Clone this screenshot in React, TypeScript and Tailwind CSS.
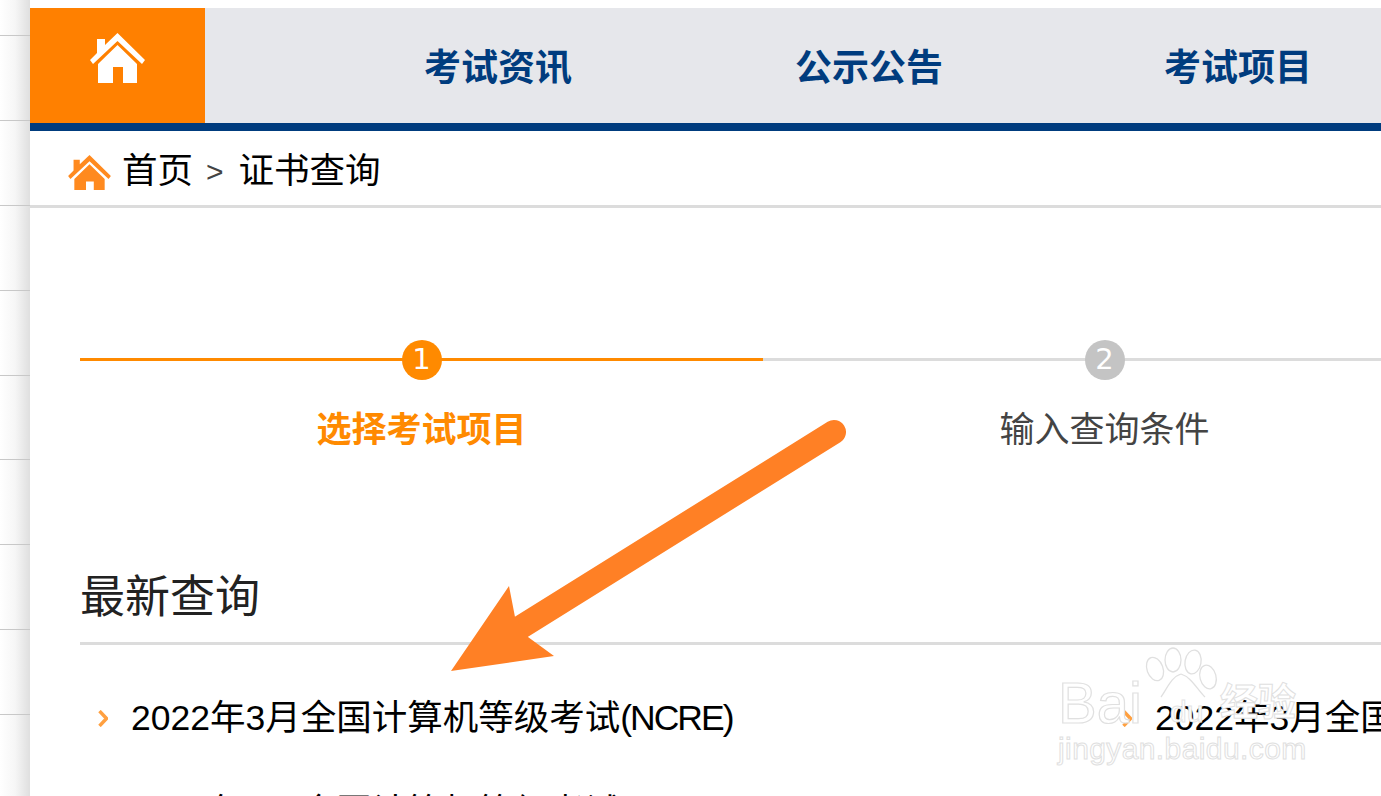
const font = "font-['Liberation_Sans','Noto_Sans_CJK_SC',sans-serif]";

function HouseIcon({ className, box }: { className: string; box: string }) {
  return (
    <svg viewBox={box} className={className} fill="currentColor">
      <path d="M27.5 0 L55 27 L52 31 L27.5 8 L3 31 L0 27 L7 20 L7 6 L15 6 L15 12 Z" />
      <path d="M27.5 12 L47 31 L47 50 L33 50 L33 34 L23 34 L23 50 L8 50 L8 31 Z" />
    </svg>
  );
}

function Chevron() {
  return (
    <svg viewBox="0 0 10 17" className="w-[10px] h-[17px] shrink-0 text-[#ffa040]" fill="none" stroke="currentColor" strokeWidth="3.4">
      <path d="M1.5 1 L8.5 8.5 L1.5 16" />
    </svg>
  );
}

function Watermark() {
  return (
    <div className="absolute left-[1058px] top-[645px] w-[310px] h-[135px]">
      <svg viewBox="0 0 80 60" className="absolute left-[85px] top-0 w-[80px] h-[60px]" fill="#ffffff" stroke="#e0e0e0" strokeWidth="1.3">
        <ellipse cx="12" cy="24" rx="8" ry="12" transform="rotate(-20 12 24)" />
        <ellipse cx="30" cy="15" rx="8" ry="12" />
        <ellipse cx="50" cy="17" rx="8" ry="12" transform="rotate(10 50 17)" />
        <ellipse cx="65" cy="32" rx="8" ry="12" transform="rotate(-15 65 32)" />
        <path d="M38 29 C28 32 24 44 18 52 M38 29 C48 32 54 44 62 52" fill="none" />
      </svg>
      <div className="absolute left-0 top-[29px] text-[58px] leading-none text-white [-webkit-text-stroke:1.2px_#e0e0e0]">Bai</div>
      <div className="absolute left-[112px] top-[52px] text-[30px] leading-none text-white [-webkit-text-stroke:1px_#e4e4e4]">du</div>
      <div className="absolute left-[162px] top-[38px] text-[38px] leading-none font-bold text-white [-webkit-text-stroke:1px_#e0e0e0]">经验</div>
      <div className="absolute left-0 top-[89px] text-[30px] leading-none tracking-[0.4px] text-white [-webkit-text-stroke:1px_#e0e0e0]">jingyan.baidu.com</div>
    </div>
  );
}

function ListItem({ children, clip }: { children: React.ReactNode; clip?: boolean }) {
  return (
    <div className={`flex items-center pl-[18px] gap-[23px] h-[60px] whitespace-nowrap ${clip ? "" : "w-[1024px] shrink-0"}`}>
      <Chevron />
      <span>{children}</span>
    </div>
  );
}

function Step({ n, title, active }: { n: string; title: string; active?: boolean }) {
  return (
    <div className="w-[683px] shrink-0 flex flex-col items-center relative">
      <div className={`absolute left-0 right-0 top-[18px] h-[3px] ${active ? "bg-[#ff8a00]" : "bg-[#dcdcdc]"}`} />
      <div className={`relative w-10 h-10 rounded-full flex items-center justify-center text-white font-['DejaVu_Sans',sans-serif] text-[29px] ${active ? "bg-[#ff8a00]" : "bg-[#c4c4c4]"}`}>{n}</div>
      <div className={`mt-[27px] text-[35px] leading-[46px] ${active ? "font-bold text-[#ff8a00]" : "text-[#444]"}`}>{title}</div>
    </div>
  );
}

export default function App() {
  return (
    <div className={`relative w-[1381px] h-[796px] overflow-hidden bg-white flex ${font}`}>
      <div className="w-[30px] h-full shrink-0 bg-gradient-to-r from-white via-[#f6f6f6] to-[#dfdfdf] flex flex-col pt-[35px] gap-[83.9px]">
        {[0, 1, 2, 3, 4, 5, 6, 7, 8].map((i) => (
          <div key={i} className="h-px bg-[#c8c8c8]" />
        ))}
      </div>

      <main className="flex-1 min-w-0 pt-2">
        <nav className="h-[123px] flex items-stretch bg-[#e6e7eb] border-b-8 border-[#003c7e]">
          <div className="w-[175px] bg-[#ff8000] flex items-center justify-center text-white">
            <HouseIcon box="0 0 55 50" className="w-[55px] h-[50px] mb-[15px]" />
          </div>
          <div className="flex items-center pt-[6px] font-bold text-[37px] text-[#003c7e] whitespace-nowrap">
            <span className="ml-[219px] w-[148px]">考试资讯</span>
            <span className="ml-[223px] w-[148px]">公示公告</span>
            <span className="ml-[221px] w-[148px]">考试项目</span>
          </div>
        </nav>

        <div className="h-[77px] border-b-[3px] border-[#dcdcdc] flex items-center pl-[38px] pt-[7px] text-[35.5px] text-black">
          <HouseIcon box="0 0 55 45" className="w-[43px] h-[35px] text-[#ff8a1f] mt-[2px]" />
          <span className="ml-[11px]">首页</span>
          <span className="ml-[13px] text-[#444] text-[30px]">&gt;</span>
          <span className="ml-[15px]">证书查询</span>
        </div>

        <div className="pl-[50px] pt-[132px]">
          <div className="flex w-[1366px]">
            <Step n="1" title="选择考试项目" active />
            <Step n="2" title="输入查询条件" />
          </div>

          <h2 className="mt-[115px] h-[77px] text-[45px] leading-[59px] text-[#222] border-b-[3px] border-[#dcdcdc] w-[1301px]">最新查询</h2>

          <div className="flex mt-[43px] text-[35.5px] leading-[60px] text-black">
            <ListItem>2022年3月全国计算机等级考试<span className="tracking-[-2px]">(NCRE)</span></ListItem>
            <ListItem clip>2022年3月全国计算机等级考试<span className="tracking-[-2px]">(NCRE)</span></ListItem>
          </div>
          <div className="mt-[34px] text-[35.5px] leading-[60px] text-black">
            <ListItem>2021年9月全国计算机等级考试</ListItem>
          </div>
        </div>
      </main>

      <svg viewBox="0 0 1381 796" className="absolute inset-0 w-[1381px] h-[796px] pointer-events-none">
        <path d="M834 432 L500 640" stroke="#ff8025" strokeWidth="24" strokeLinecap="round" fill="none" />
        <path d="M451 671 L509 586 L515 617 L528 637 L554 656 Z" fill="#ff8025" />
      </svg>
      <Watermark />
    </div>
  );
}
